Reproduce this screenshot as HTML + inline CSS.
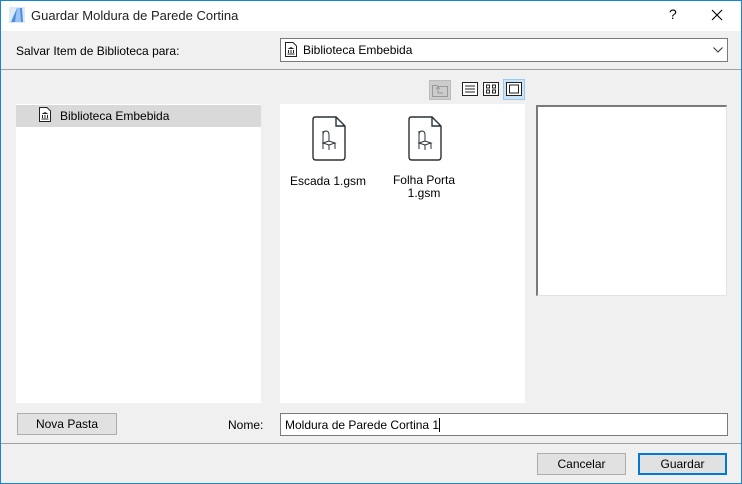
<!DOCTYPE html>
<html><head><meta charset="utf-8"><style>
*{margin:0;padding:0;box-sizing:border-box}
body{width:742px;height:484px;overflow:hidden;font-family:"Liberation Sans",sans-serif;font-size:12px;color:#000;background:#f0f0f0;position:relative}
.a{position:absolute}
.btn{position:absolute;background:#e1e1e1;border:1px solid #adadad;text-align:center;line-height:20px;font-size:12px}
</style></head><body>
<div class="a" style="left:0;top:0;width:742px;height:484px;border:1px solid #1883d7"></div>
<div class="a" style="left:1px;top:1px;width:740px;height:30px;background:#fff"></div>
<svg class="a" style="left:9px;top:7px" width="16" height="16" viewBox="0 0 16 16"><rect x="0" y="0" width="16" height="16" fill="#dfe9f5"/><path d="M2 15 L8 1 L13 1 L14 15 Z" fill="#4a8ee0"/><path d="M8 1 L11 1 L12 15 L6 15 Z" fill="#9cc4f2"/></svg>
<div class="a" style="left:31px;top:8px;font-size:13px;color:#222">Guardar Moldura de Parede Cortina</div>
<div class="a" style="left:669px;top:6px;font-size:14px">?</div>
<svg class="a" style="left:711px;top:9px" width="12" height="12"><path d="M1 1L11 11M11 1L1 11" stroke="#000" stroke-width="1.1"/></svg>
<div class="a" style="left:16px;top:44px">Salvar Item de Biblioteca para:</div>
<div class="a" style="left:280px;top:38px;width:448px;height:24px;background:#fff;border:1px solid #7a7a7a"></div>
<svg class="a" style="left:285px;top:42px" width="12" height="15" viewBox="0 0 12 15"><path d="M0.5 0.5H8L11.5 4V14.5H0.5Z" fill="#fff" stroke="#222"/><path d="M2.5 7L6 5L9.5 7ZM3 8h1v3H3zM5.5 8h1v3h-1zM8 8h1v3H8zM2.5 11.5h7v1h-7z" fill="#222"/></svg>
<div class="a" style="left:303px;top:43px">Biblioteca Embebida</div>
<svg class="a" style="left:713px;top:47px" width="10" height="6"><path d="M0.5 0.5L5 5L9.5 0.5" stroke="#333" fill="none"/></svg>
<div class="a" style="left:1px;top:69px;width:740px;height:1px;background:#a0a0a0"></div>
<div class="a" style="left:429px;top:80px;width:22px;height:20px;background:#ccc;border:1px solid #bbb"></div>
<svg class="a" style="left:432px;top:83px" width="16" height="14"><path d="M0.5 2.5H5L6 3.5H15.5V13.5H0.5Z" fill="none" stroke="#999"/><path d="M4 6L6 4L8 6M6 4V10H11" stroke="#999" fill="none"/></svg>
<svg class="a" style="left:462px;top:82px" width="16" height="14"><rect x="0.5" y="0.5" width="15" height="13" fill="#fff" stroke="#222"/><path d="M3 4h10M3 7h10M3 10h10" stroke="#222"/></svg>
<svg class="a" style="left:483px;top:82px" width="16" height="14"><rect x="0.5" y="0.5" width="15" height="13" fill="#fff" stroke="#222"/><rect x="3.5" y="3" width="3" height="3" fill="none" stroke="#222"/><rect x="9.5" y="3" width="3" height="3" fill="none" stroke="#222"/><rect x="3.5" y="8" width="3" height="3" fill="none" stroke="#222"/><rect x="9.5" y="8" width="3" height="3" fill="none" stroke="#222"/></svg>
<div class="a" style="left:503px;top:79px;width:22px;height:21px;background:#cce4f7;border:1px solid #99c9ef"></div>
<svg class="a" style="left:506px;top:82px" width="16" height="14"><rect x="0.5" y="0.5" width="15" height="13" fill="#fff" stroke="#222"/><rect x="3.5" y="3" width="9" height="8" fill="none" stroke="#222"/></svg>
<div class="a" style="left:16px;top:104px;width:245px;height:299px;background:#fff"></div>
<div class="a" style="left:16px;top:105px;width:245px;height:22px;background:#d9d9d9"></div>
<svg class="a" style="left:39px;top:107px" width="12" height="15" viewBox="0 0 12 15"><path d="M0.5 0.5H8L11.5 4V14.5H0.5Z" fill="#fff" stroke="#222"/><path d="M2.5 7L6 5L9.5 7ZM3 8h1v3H3zM5.5 8h1v3h-1zM8 8h1v3H8zM2.5 11.5h7v1h-7z" fill="#222"/></svg>
<div class="a" style="left:60px;top:109px">Biblioteca Embebida</div>
<div class="a" style="left:280px;top:104px;width:245px;height:299px;background:#fff"></div>
<svg class="a" style="left:312px;top:116px" width="34" height="45" viewBox="0 0 34 45"><path d="M3 1H24L33 10V41Q33 44 30 44H4Q1 44 1 41V4Q1 1 3 1Z M24 1V10H33" fill="#fff" stroke="#2a3038" stroke-width="1.4"/><path d="M11 15V33M11 19Q11 15 14 15Q17 15 17 19V25M11 27L17 25L23 27L17 29Z M17 29V34M23 27V33" fill="none" stroke="#2a3038" stroke-width="1"/></svg>
<svg class="a" style="left:408px;top:116px" width="34" height="45" viewBox="0 0 34 45"><path d="M3 1H24L33 10V41Q33 44 30 44H4Q1 44 1 41V4Q1 1 3 1Z M24 1V10H33" fill="#fff" stroke="#2a3038" stroke-width="1.4"/><path d="M11 15V33M11 19Q11 15 14 15Q17 15 17 19V25M11 27L17 25L23 27L17 29Z M17 29V34M23 27V33" fill="none" stroke="#2a3038" stroke-width="1"/></svg>
<div class="a" style="left:280px;top:174px;width:96px;text-align:center">Escada 1.gsm</div>
<div class="a" style="left:376px;top:174px;width:96px;text-align:center;line-height:13px">Folha Porta<br>1.gsm</div>
<div class="a" style="left:536px;top:105px;width:191px;height:191px;background:#fff;border-top:2px solid #7a7a7a;border-left:2px solid #7a7a7a;border-right:1px solid #e3e3e3;border-bottom:1px solid #e3e3e3"></div>
<div class="btn" style="left:17px;top:413px;width:100px;height:22px">Nova Pasta</div>
<div class="a" style="left:228px;top:418px">Nome:</div>
<div class="a" style="left:280px;top:413px;width:448px;height:23px;background:#fff;border:1px solid #7a7a7a;padding:4px 0 0 4px">Moldura de Parede Cortina 1<span style="display:inline-block;width:1px;height:14px;background:#000;vertical-align:-3px"></span></div>
<div class="a" style="left:1px;top:443px;width:740px;height:1px;background:#a0a0a0"></div>
<div class="btn" style="left:537px;top:453px;width:89px;height:22px">Cancelar</div>
<div class="btn" style="left:638px;top:453px;width:89px;height:22px;border:2px solid #0078d7;line-height:18px">Guardar</div>
</body></html>
